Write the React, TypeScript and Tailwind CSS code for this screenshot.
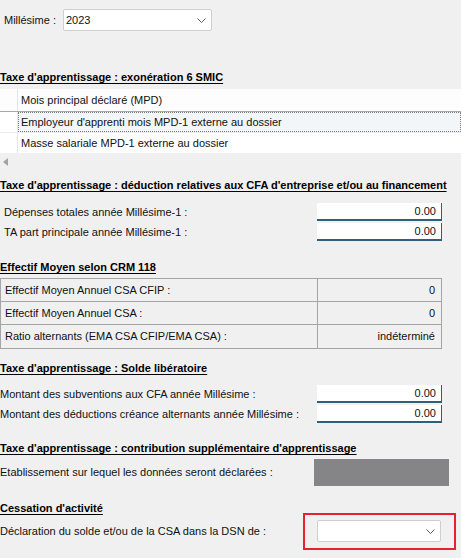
import { ChevronDown } from "lucide-react"

const Heading = ({ children, className = "" }: any) => (
    <div className={"h-4 leading-4 font-bold underline underline-offset-2 whitespace-nowrap overflow-hidden text-black " + className}>
        {children}
    </div>
)

const Chevron = () => (
    <svg width="9" height="5" viewBox="0 0 9 5" className="shrink-0">
        <polyline points="0.5,0.5 4.5,4.5 8.5,0.5" fill="none" stroke="#606060" strokeWidth="1" />
    </svg>
)

const Select = ({ value, className = "" }: any) => (
    <div className={"h-[22px] bg-white border border-[#cfcfcf] rounded-[2px] flex items-center justify-between pl-[2px] pr-[5px] " + className}>
        <span>{value}</span>
        <Chevron />
    </div>
)

const Amount = ({ label, pad = "pl-1" }: any) => (
    <div className={"h-[18px] flex items-center " + pad}>
        <span className="flex-1">{label}</span>
        <div className="ml-auto mr-[19px] w-[125px] h-[18px] bg-white border-b-2 border-r border-[#2f6079] flex items-center justify-end pr-[5px]">
            0.00
        </div>
    </div>
)

const StatRow = ({ label, value, last }: any) => (
    <div className={"h-[23px] flex " + (last ? "" : "border-b border-[#a5a5a5]")}>
        <div className="w-[317px] border-r border-[#a5a5a5] pl-1 flex items-center">{label}</div>
        <div className="flex-1 flex items-center justify-end pr-[6px]">{value}</div>
    </div>
)

export default function App() {
    return (
        <div
            className="w-[461px] h-[558px] bg-[#f0f0f0] text-[11px] text-[#111] overflow-hidden flex flex-col"
            style={{ fontFamily: '"Liberation Sans", Arial, sans-serif' }}
        >
            {/* année */}
            <div className="mt-[9px] flex items-center pl-1">
                <span className="w-[59px]">Millésime :</span>
                <Select value="2023" className="w-[149px]" />
            </div>

            {/* exonération */}
            <Heading className="mt-[38px]">Taxe d'apprentissage : exonération 6 SMIC</Heading>
            <div className="mt-1 flex flex-col">
                <div className="h-[23px] flex bg-[#fdfdfd] border-b border-[#a8a8a8]">
                    <div className="w-[18px] border-r border-[#e6e6e6]" />
                    <div className="pl-[3px] flex items-center">Mois principal déclaré (MPD)</div>
                </div>
                <div className="h-[21px] flex bg-white border-b border-[#ececec]">
                    <div className="w-[18px] border-r border-[#e6e6e6]" />
                    <div className="flex-1 flex items-center pl-[2px] bg-[#f3f6f8] border border-dotted border-[#7a7a7a]">
                        Employeur d'apprenti mois MPD-1 externe au dossier
                    </div>
                </div>
                <div className="h-[20px] flex bg-white">
                    <div className="w-[18px] border-r border-[#e6e6e6]" />
                    <div className="pl-[3px] flex items-center">Masse salariale MPD-1 externe au dossier</div>
                </div>
                <div className="h-[17px] flex items-center pl-[3px]">
                    <svg width="5" height="8" viewBox="0 0 5 8">
                        <polygon points="5,0 0,4 5,8" fill="#a3a3a3" />
                    </svg>
                </div>
            </div>

            {/* déduction CFA */}
            <Heading className="mt-[7px]">
                Taxe d'apprentissage : déduction relatives aux CFA d'entreprise et/ou au financement
            </Heading>
            <div className="mt-[10px] flex flex-col gap-[2px]">
                <Amount label="Dépenses totales année Millésime-1 :" />
                <Amount label="TA part principale année Millésime-1 :" />
            </div>

            {/* effectif moyen */}
            <Heading className="mt-[18px]">Effectif Moyen selon CRM 118</Heading>
            <div className="mt-[3px] w-[442px] border border-[#a5a5a5] flex flex-col">
                <StatRow label="Effectif Moyen Annuel CSA CFIP :" value="0" />
                <StatRow label="Effectif Moyen Annuel CSA :" value="0" />
                <StatRow label="Ratio alternants (EMA CSA CFIP/EMA CSA) :" value="indéterminé" last />
            </div>

            {/* solde libératoire */}
            <Heading className="mt-[11px]">Taxe d'apprentissage : Solde libératoire</Heading>
            <div className="mt-[9px] flex flex-col gap-[2px]">
                <Amount label="Montant des subventions aux CFA année Millésime :" pad="pl-0" />
                <Amount label="Montant des déductions créance alternants année Millésime :" pad="pl-0" />
            </div>

            {/* contribution supplémentaire */}
            <Heading className="mt-[17px]">Taxe d'apprentissage : contribution supplémentaire d'apprentissage</Heading>
            <div className="mt-[3px] h-[27px] flex items-center">
                <span className="flex-1">Etablissement sur lequel les données seront déclarées :</span>
                <div className="w-[135px] h-[27px] mr-[12px] bg-[#858588]" />
            </div>

            {/* cessation */}
            <Heading className="mt-[14px]">Cessation d'activité</Heading>
            <div className="mt-1 h-[22px] flex items-center">
                <span className="flex-1">Déclaration du solde et/ou de la CSA dans la DSN de :</span>
                <div className="relative mr-[20px]">
                    <Select value="" className="w-[124px]" />
                    <div className="absolute -left-[14px] -top-[7px] w-[153px] h-[37px] border-2 border-[#e3242b] pointer-events-none" />
                </div>
            </div>
        </div>
    )
}
